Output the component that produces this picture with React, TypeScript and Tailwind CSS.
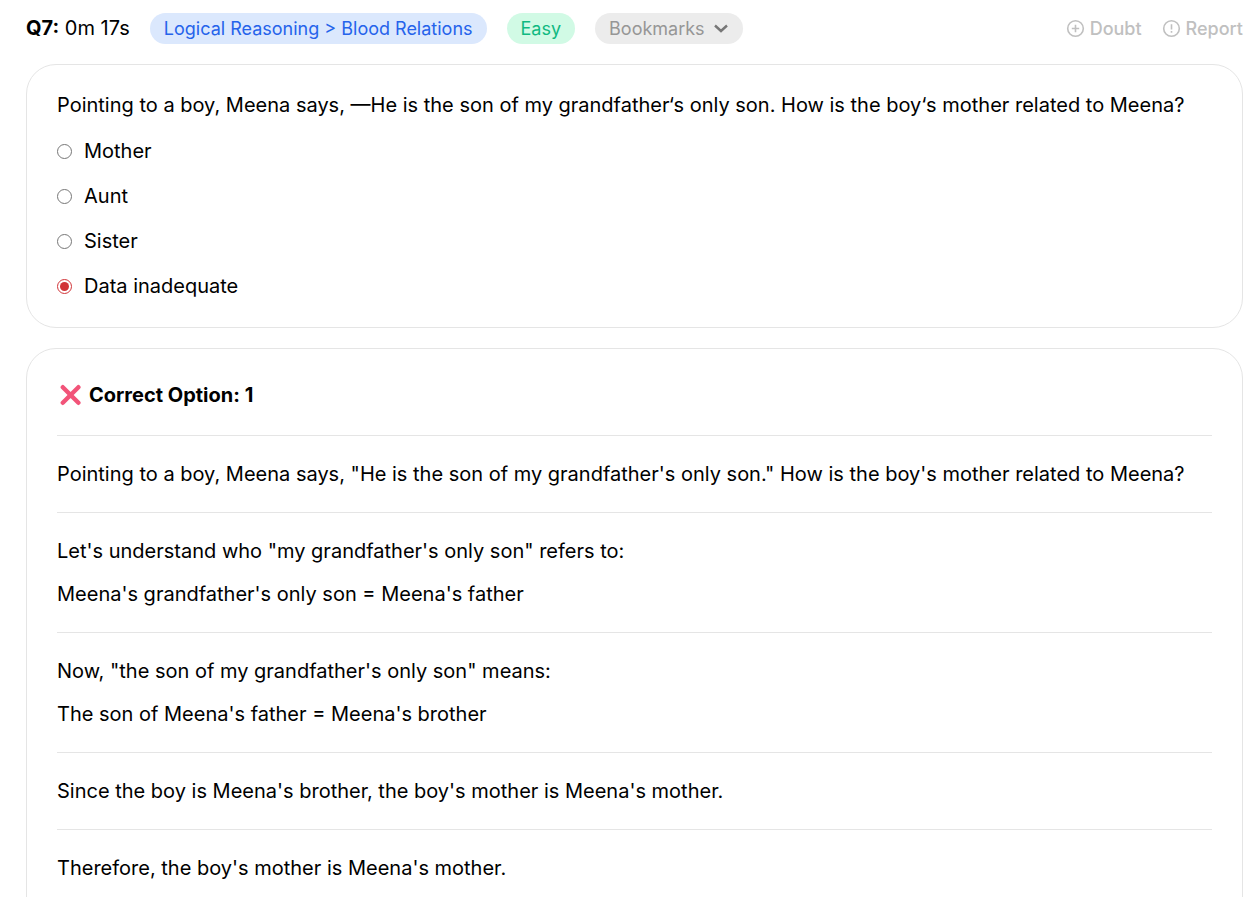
import { useState } from "react";

const options = ["Mother", "Aunt", "Sister", "Data inadequate"];

const explanation = [
  ["Pointing to a boy, Meena says, \"He is the son of my grandfather's only son.\" How is the boy's mother related to Meena?"],
  ["Let's understand who \"my grandfather's only son\" refers to:", "Meena's grandfather's only son = Meena's father"],
  ["Now, \"the son of my grandfather's only son\" means:", "The son of Meena's father = Meena's brother"],
  ["Since the boy is Meena's brother, the boy's mother is Meena's mother."],
  ["Therefore, the boy's mother is Meena's mother."],
];

function QuestionHeader() {
  return (
    <header className="flex items-end gap-5 pt-3 text-lg">
      <p className="text-xl leading-8">
        <strong className="font-bold">Q7:</strong> 0m 17s
      </p>
      <a href="#topic" className="rounded-full bg-[#dbe8fd] px-[14px] pt-[2px] pb-px leading-7 text-[#2563eb]">
        Logical Reasoning &gt; Blood Relations
      </a>
      <span className="rounded-full bg-[#d1fae5] px-[14px] pt-[2px] pb-px leading-7 text-[#10b981]">Easy</span>
      <button className="flex items-center gap-2 rounded-full bg-[#ececec] px-[14px] pt-[2px] pb-px leading-7 text-[#969696]">
        Bookmarks
        <svg className="h-4 w-4" viewBox="0 0 16 16" fill="none" stroke="#777" strokeWidth="2.4">
          <path d="M2 4.5L8 10 14 4.5" />
        </svg>
      </button>
      <div className="ml-auto flex items-center gap-5 pt-[2px] pb-px leading-7 font-medium text-[#c0c0c0]">
        <button className="flex items-center gap-1">
          <svg className="h-5 w-5" viewBox="0 0 20 20" fill="none" stroke="currentColor" strokeWidth="1.6">
            <circle cx="9.5" cy="9.5" r="7.8" />
            <path d="M9.5 5.8v7.4M5.8 9.5h7.4" />
          </svg>
          Doubt
        </button>
        <button className="flex items-center gap-1">
          <svg className="h-5 w-5" viewBox="0 0 20 20" fill="none" stroke="currentColor" strokeWidth="1.6">
            <circle cx="9.5" cy="9.5" r="7.8" />
            <path d="M9.5 5.2v5.2M9.5 12v1.8" />
          </svg>
          Report
        </button>
      </div>
    </header>
  );
}

export default function App() {
  const [selected, setSelected] = useState("Data inadequate");

  return (
    <main className="h-screen overflow-hidden bg-white pr-1 pl-[26px] font-['Inter',sans-serif] text-xl text-black">
      <QuestionHeader />

      <section className="mt-5 rounded-[30px] border border-[#e5e5e5] px-[30px] pt-6 pb-[25px]">
        <p className="leading-8">
          Pointing to a boy, Meena says, —He is the son of my grandfather‘s only son. How is the boy‘s mother related to Meena?
        </p>
        <div className="mt-[14px] flex flex-col gap-[13px]">
          {options.map((option) => (
            <label key={option} className="flex items-center gap-3 leading-8">
              <input
                type="radio"
                name="answer"
                className="h-[15px] w-[15px] accent-[#d13438]"
                checked={selected === option}
                onChange={() => setSelected(option)}
              />
              {option}
            </label>
          ))}
        </div>
      </section>

      <section className="mt-5 rounded-[30px] border border-[#e5e5e5] px-[30px] pt-[30px] pb-16">
        <h2 className="flex items-center gap-2 pb-[2px] leading-8 font-bold">
          <svg className="h-6 w-6" viewBox="0 0 24 24" stroke="#f25479" strokeWidth="4.4">
            <path d="M5.8 4.2l15.6 15.6M21.4 4.2L5.8 19.8" strokeLinecap="round" />
          </svg>
          Correct Option: 1
        </h2>
        {explanation.map((lines) => (
          <div key={lines[0]} className="mt-[22px] flex flex-col gap-[11px] border-t border-[#e5e5e5] pt-[22px] leading-8">
            {lines.map((line) => (
              <p key={line}>{line}</p>
            ))}
          </div>
        ))}
      </section>
    </main>
  );
}
